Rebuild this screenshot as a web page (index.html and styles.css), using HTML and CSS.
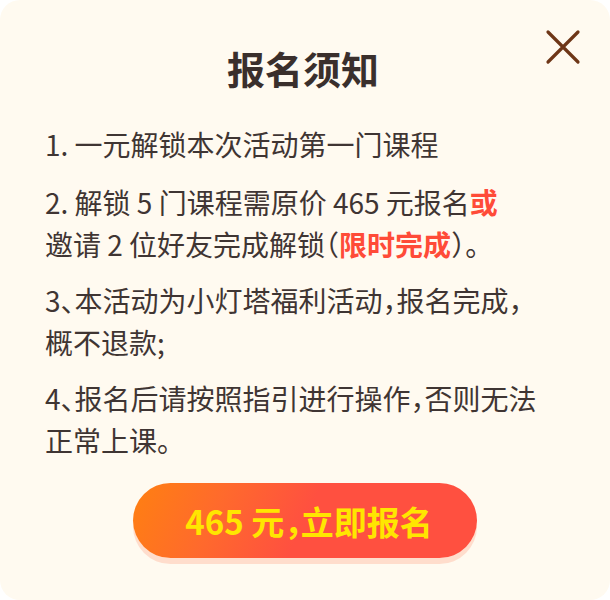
FILE: index.html
```html
<!DOCTYPE html>
<html lang="zh-CN">
<head>
<meta charset="utf-8">
<link rel="stylesheet" href="styles.css">
</head>
<body>
<div class="card">
  <button class="close" aria-label="关闭">
    <svg width="36" height="36" viewBox="0 0 36 36"><path d="M3 3 L33 33 M33 3 L3 33" stroke="#6e3617" stroke-width="3.2" stroke-linecap="round" fill="none"/></svg>
  </button>
  <h1 class="title">报名须知</h1>
  <div class="rules">
    <p>1. 一元解锁本次活动第一门课程</p>
    <p>2. 解锁 5 门课程需原价 465 元报名<b class="red">或</b><br>邀请 2 位好友完成解锁<span class="half">（</span><b class="red">限时完成</b><span class="half">）</span>。</p>
    <p>3<span class="half">、</span>本活动为小灯塔福利活动<span class="half">，</span>报名完成<span class="half">，</span><br>概不退款;</p>
    <p>4<span class="half">、</span>报名后请按照指引进行操作<span class="half">，</span>否则无法<br>正常上课。</p>
  </div>
  <div class="action">
    <button class="cta">465 元<span class="half">，</span>立即报名</button>
  </div>
</div>
</body>
</html>
```
FILE: styles.css
```css
* { box-sizing: border-box; }
html, body { margin: 0; padding: 0; background: #ffffff; }
body { font-family: "Noto Sans CJK SC", "Noto Sans", sans-serif; }
.card {
  position: relative;
  width: 610px;
  height: 600px;
  background: #fffaf0;
  border-radius: 20px;
  padding-top: 48px;
  display: flex;
  flex-direction: column;
}
.close {
  position: absolute;
  top: 29px;
  right: 29px;
  width: 36px;
  height: 36px;
  padding: 0;
  border: 0;
  background: none;
  display: block;
}
.close svg { display: block; }
.title {
  margin: 0;
  padding-right: 4px;
  text-align: center;
  font-size: 38px;
  line-height: 40px;
  font-weight: 700;
  color: #3a2f2c;
}
.rules {
  padding: 0 20px 0 45px;
  margin-top: 35px;
  color: #3f3533;
  font-size: 28px;
  line-height: 42px;
  font-weight: 400;
}
.rules p { margin: 0 0 14px; white-space: nowrap; }
.rules p:first-child { margin-bottom: 16px; }
.half { font-feature-settings: "halt"; }
.red { color: #ff4b38; font-weight: 700; }
.action {
  display: flex;
  justify-content: center;
  margin-top: 8px;
}
.cta {
  width: 344px;
  height: 75px;
  border: 0;
  border-radius: 38px;
  background: linear-gradient(115deg, #ff8011 0%, #ff6a2c 25%, #ff5040 50%, #ff5040 100%);
  box-shadow: 0 6px 0 #ffddcc;
  color: #ffe600;
  font-family: "Noto Sans CJK SC", sans-serif;
  font-size: 33px;
  font-weight: 700;
  padding: 0 0 0 8px;
}
```
